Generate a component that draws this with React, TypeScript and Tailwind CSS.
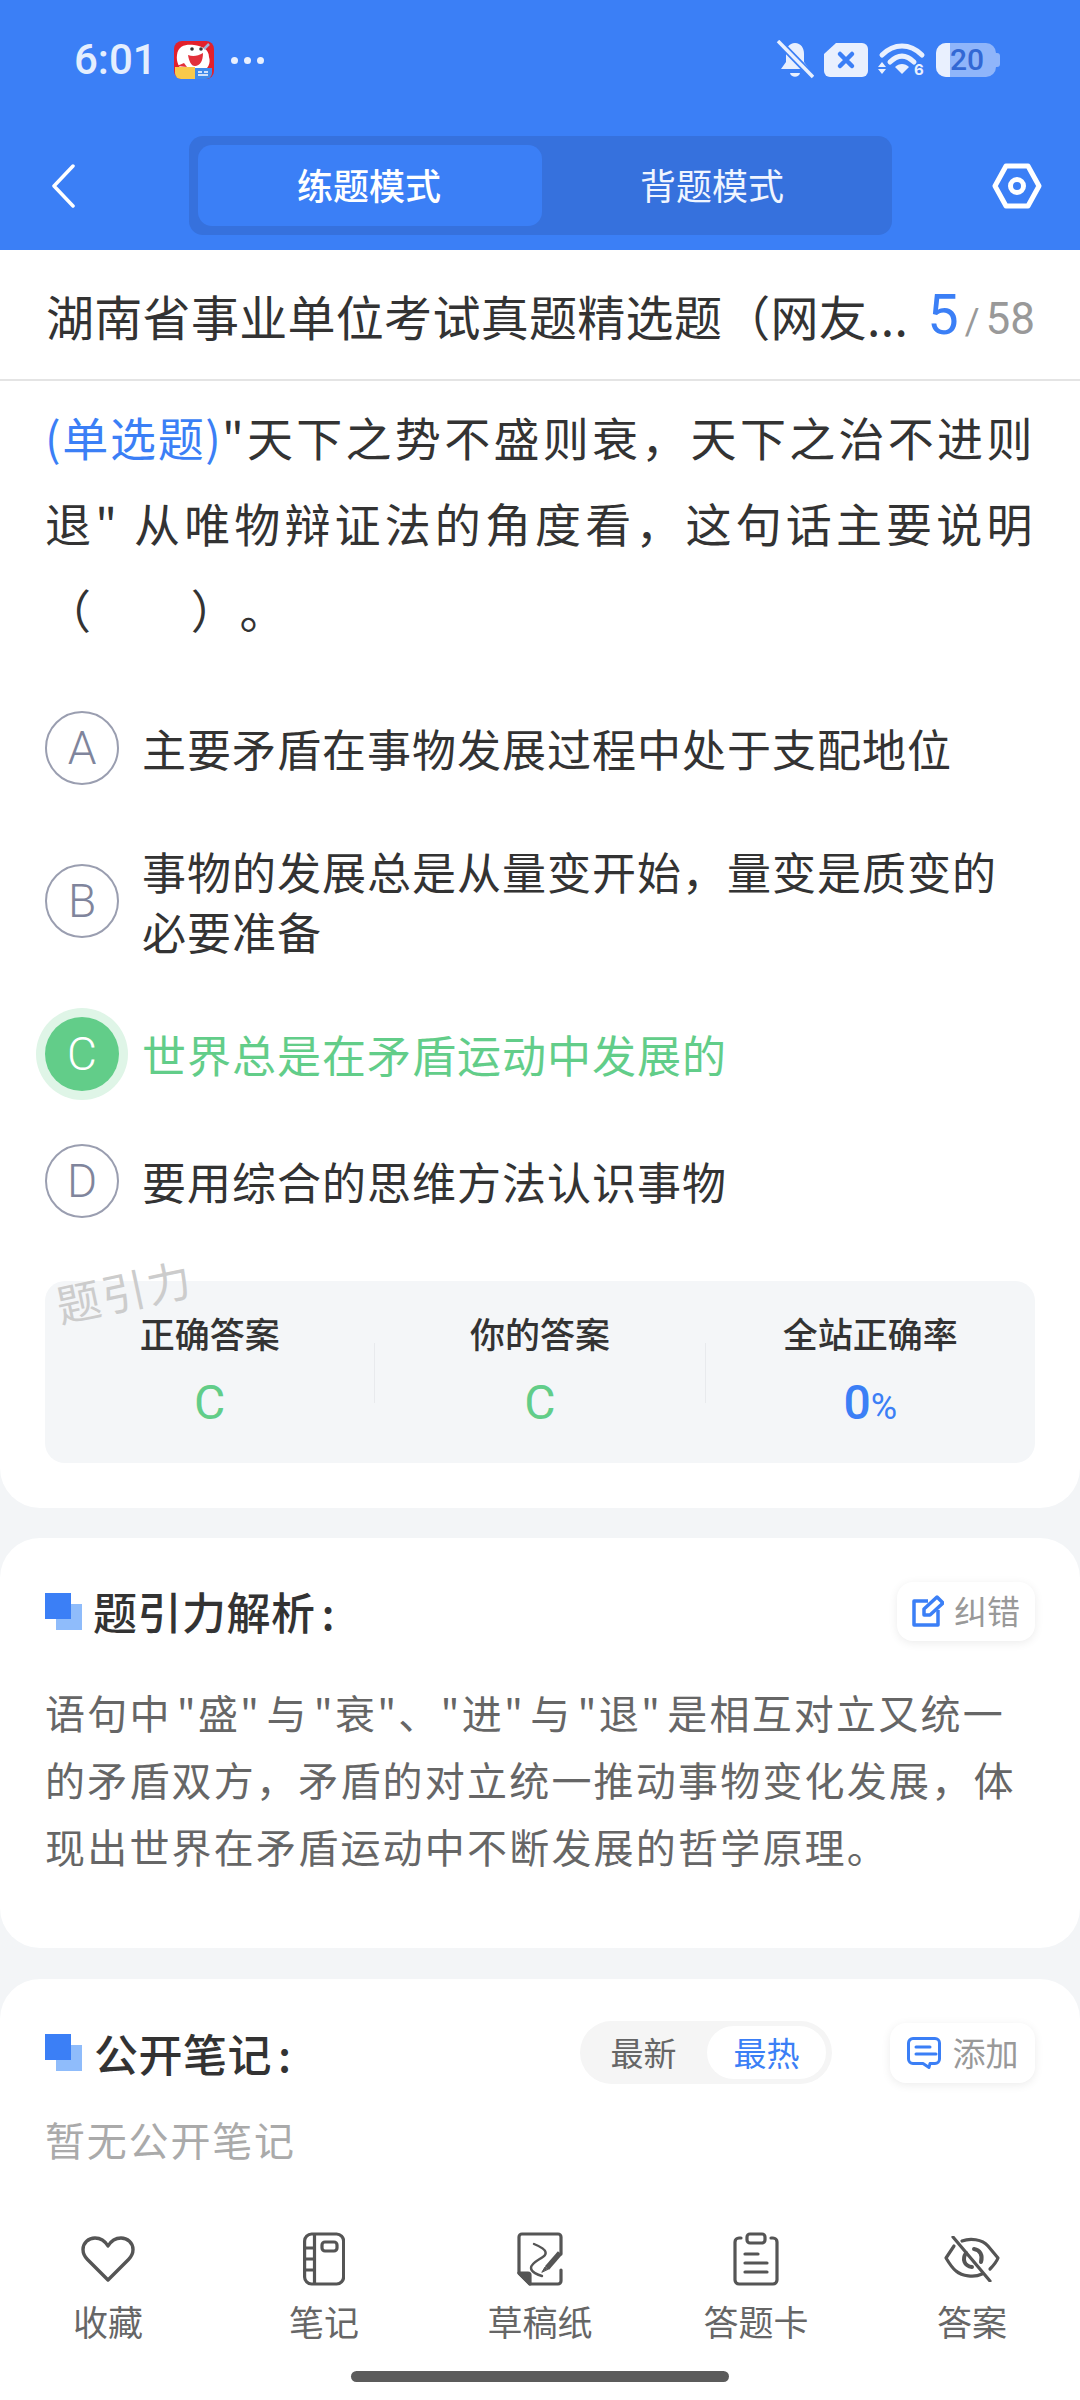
const font = "font-['Noto_Sans_CJK_SC','Noto_Sans',sans-serif]"

function StatusIcons() {
  return (
    <div className="flex items-center gap-[10px]">
      {/* muted bell */}
      <svg width="38" height="40" viewBox="0 0 38 40" className="text-[#e9f0fe]">
        <path d="M19 3c6 0 9 5 9 11v8l5 7H5l5-7v-8c0-6 3-11 9-11z" fill="currentColor" />
        <path d="M14 33h10c-1 5-9 5-10 0z" fill="currentColor" />
        <path d="M1 0L37 37" stroke="#3b7ff6" strokeWidth="7" />
        <path d="M2 1L37 37" stroke="currentColor" strokeWidth="3.5" />
      </svg>
      <svg width="44" height="34" viewBox="0 0 44 34">
        <path d="M12 0h26a6 6 0 016 6v22a6 6 0 01-6 6H6a6 6 0 01-6-6V11z" fill="#e9f0fe" />
        <path d="M16 11l12 12M28 11L16 23" stroke="#3b7ff6" strokeWidth="4.5" strokeLinecap="round" />
      </svg>
      <svg width="48" height="34" viewBox="0 0 48 34" fill="none" className="overflow-visible text-[#e9f0fe]">
        <path d="M4 12C16 0 32 0 44 12" stroke="currentColor" strokeWidth="5" strokeLinecap="round" />
        <path d="M12 19C20 11 28 11 36 19" stroke="currentColor" strokeWidth="5" strokeLinecap="round" />
        <path d="M17 24c4-4 10-4 14 0l-7 7z" fill="currentColor" />
        <path d="M4 19l4 5H0zM4 31l4-5H0z" fill="currentColor" />
        <text x="36" y="32" fontSize="15" fontWeight="700" fill="currentColor" fontFamily="Inter">6</text>
      </svg>
      <div className="relative flex h-[34px] w-[60px] items-center overflow-hidden rounded-[10px] bg-[#8fb5fa]">
        <div className="h-full w-[14px] bg-[#e9f0fe]" />
        <span className="absolute left-[14px] font-['Roboto'] text-[30px] leading-[34px] font-medium text-[#3268d4]">20</span>
      </div>
      <div className="-ml-[10px] h-[14px] w-[4px] rounded-r-[3px] bg-[#8fb5fa]" />
    </div>
  )
}

function AppIcon() {
  return (
    <svg width="40" height="38" viewBox="0 0 40 38">
      <rect width="40" height="38" rx="8" fill="#e2202c" />
      <path d="M3 14C4 4 13 3 20 4c8 1 15 4 15 12 2 6-1 12-6 14H10C5 27 2 21 3 14z" fill="#fff" />
      <path d="M14 14c5 2 10 1 15-2 0 8-3 13-8 13-4 0-6-5-7-11z" fill="#e2303a" />
      <circle cx="18" cy="8" r="1.8" fill="#333" />
      <circle cx="27" cy="8" r="1.8" fill="#333" />
      <path d="M30 8l5-5" stroke="#9fb4d8" strokeWidth="2.5" />
      <path d="M1 26h20v12H7a6 6 0 01-6-6z" fill="#f8c94a" />
      <path d="M3 25l7-3 3 4z" fill="#e2303a" />
      <path d="M21 27h17v5a6 6 0 01-6 6H21z" fill="#3f8bea" />
      <path d="M24 31h4M30 31h4M24 34h10" stroke="#fff" strokeWidth="1.5" />
    </svg>
  )
}

function Squares() {
  return (
    <div className="relative h-[37px] w-[37px] shrink-0">
      <div className="absolute right-0 bottom-0 h-[26px] w-[26px] bg-[#8fbcfb]" />
      <div className="absolute top-0 left-0 h-[26px] w-[26px] bg-[#3b7ff6]" />
    </div>
  )
}

function Option({ letter, lines, active }: { letter: string; lines: string[]; active?: boolean }) {
  return (
    <div className={`flex items-center gap-[23px] ${lines.length > 1 ? "py-[3px]" : ""}`}>
      {active ? (
        <div className="flex h-[74px] w-[74px] shrink-0 items-center justify-center rounded-full bg-[#62cd89] font-['Roboto'] text-[46px] font-light text-white shadow-[0_0_0_9px_#dff5e7]">
          {letter}
        </div>
      ) : (
        <div className="flex h-[74px] w-[74px] shrink-0 items-center justify-center rounded-full border-[2px] border-[#9a9eb0] font-['Roboto'] text-[46px] font-light text-[#80859c]">
          {letter}
        </div>
      )}
      <div className={`text-[44px] leading-[60px] tracking-[1px] ${active ? "text-[#62cd89]" : "text-[#333333]"}`}>
        {lines.map((l) => (
          <div key={l}>{l}</div>
        ))}
      </div>
    </div>
  )
}

function Stat({ label, children }: { label: string; children: React.ReactNode }) {
  return (
    <div className="flex flex-1 flex-col items-center">
      <div className="text-[35px] leading-[52px] font-medium text-[#333333]">{label}</div>
      <div className="mt-[16px] font-['Roboto'] text-[48px] leading-[56px]">{children}</div>
    </div>
  )
}

const tabs = [
  {
    label: "收藏",
    icon: (
      <svg width="54" height="48" viewBox="0 0 54 48" fill="none" stroke="currentColor" strokeWidth="3.4" strokeLinejoin="round">
        <path d="M27 45L6.5 24.5C3.5 21.5 2 18 2 14.5 2 8 7.5 3 14 3c5.5 0 10 3 13 8 3-5 7.500-8 13-8 6.500 0 12 5 12 11.500 0 3.500-1.500 7-4.500 10z" />
      </svg>
    ),
  },
  {
    label: "笔记",
    icon: (
      <svg width="42" height="54" viewBox="0 0 42 54" fill="none" stroke="currentColor" strokeWidth="3.2" strokeLinejoin="round">
        <rect x="1.600" y="2" width="39" height="50" rx="7" />
        <path d="M11.500 2v50M2 16h9.500M2 27h9.500M2 38h9.500" />
        <rect x="19" y="10" width="15" height="9" rx="3" />
      </svg>
    ),
  },
  {
    label: "草稿纸",
    icon: (
      <svg width="46" height="54" viewBox="0 0 46 54" fill="none" stroke="currentColor" strokeWidth="3.2" strokeLinejoin="round" strokeLinecap="round">
        <path d="M44 22V5a3 3 0 00-3-3H5a3 3 0 00-3 3v36l11 11h28a3 3 0 003-3V38" />
        <path d="M2 41h9a2 2 0 012 2v9z" fill="currentColor" />
        <path d="M17 12c5 2 14 6 11 11-3 4-14 7-14 13 0 4 7 7 11 8" strokeWidth="2.4" />
        <path d="M30 36l13-15" strokeWidth="5.500" strokeLinecap="butt" />
        <path d="M25 40l3-5 3 2z" fill="currentColor" strokeWidth="1" />
      </svg>
    ),
  },
  {
    label: "答题卡",
    icon: (
      <svg width="46" height="54" viewBox="0 0 46 54" fill="none" stroke="currentColor" strokeWidth="3.2" strokeLinecap="round" strokeLinejoin="round">
        <path d="M8 6H6a4 4 0 00-4 4v38a4 4 0 004 4h34a4 4 0 004-4V10a4 4 0 00-4-4h-2" />
        <rect x="14" y="2" width="18" height="9" rx="3" />
        <path d="M12 22h13M12 31h22M12 40h22" />
      </svg>
    ),
  },
  {
    label: "答案",
    icon: (
      <svg width="56" height="46" viewBox="0 0 56 46" fill="none" stroke="currentColor" strokeWidth="3.2" strokeLinecap="round" strokeLinejoin="round">
        <path d="M10 10L2 22c3 5 6 10 10 13 6 5 18 7 26 3" />
        <path d="M18 5c8-3 20-2 26 5l10 12c-2 5-5 8-8 11" />
        <path d="M22 17c-4 6-2 13 6 14M30 13c6 1 9 6 7 13" strokeWidth="4" />
        <path d="M9 1l37 44" />
      </svg>
    ),
  },
]

export default function App() {
  return (
    <div className={`${font} flex h-[2400px] w-[1080px] flex-col overflow-hidden bg-[#f3f5f7]`}>
      {/* Blue header */}
      <div className="h-[250px] shrink-0 bg-[#3b7ff6]">
        <div className="flex h-[136px] items-start justify-between pt-[40px] pr-[80px] pl-[74px]">
          <div className="flex items-center gap-[17px] text-[#e4eefe]">
            <span className="font-['Roboto'] text-[42px] leading-[40px] font-medium">6:01</span>
            <AppIcon />
            <span className="flex gap-[6px]">
              <i className="h-[7px] w-[7px] rounded-full bg-[#e9f0fe]" />
              <i className="h-[7px] w-[7px] rounded-full bg-[#e9f0fe]" />
              <i className="h-[7px] w-[7px] rounded-full bg-[#e9f0fe]" />
            </span>
          </div>
          <StatusIcons />
        </div>
        <div className="flex items-center pr-[38px] pl-[50px]">
          <svg width="26" height="44" viewBox="0 0 26 44" fill="none" stroke="#fff" strokeWidth="3.5" strokeLinecap="round" strokeLinejoin="round">
            <path d="M23 2L4 22l19 20" />
          </svg>
          <div className="ml-[113px] flex h-[99px] w-[703px] rounded-[14px] bg-[#3671dd] p-[9px] pr-0">
            <div className="flex h-[81px] w-[344px] items-center justify-center rounded-[14px] bg-[#3b7ff6] pr-[2px] pb-[4px] text-[36px] font-medium text-white">练题模式</div>
            <div className="flex h-[81px] w-[344px] items-center justify-center pr-[4px] pb-[4px] text-[36px] text-[#f0f5ff]">背题模式</div>
          </div>
          <svg className="ml-auto" width="50" height="46" viewBox="0 0 50 46" fill="none" stroke="#fff" strokeWidth="5" strokeLinejoin="round">
            <path d="M14 3h22l11 20-11 20H14L3 23z" />
            <circle cx="25" cy="23" r="6.5" />
          </svg>
        </div>
      </div>

      {/* Question card */}
      <div className="shrink-0 rounded-b-[40px] bg-white pb-[45px]">
        <div className="flex h-[131px] items-center border-b-[2px] border-[#e4e4e4] pr-[45px] pl-[46px]">
          <div className="shrink-0 text-[48px] tracking-[0.3px] whitespace-nowrap text-[#333333]">湖南省事业单位考试真题精选题（网友...</div>
          <div className="ml-auto flex items-baseline font-['Roboto']">
            <span className="text-[56px] text-[#3b7ff6]">5</span>
            <span className="mx-[6px] text-[36px] text-[#999999]">/</span>
            <span className="text-[44px] text-[#999999]">58</span>
          </div>
        </div>
        <div className="px-[45px] pt-[12px] text-[46px] leading-[86px] tracking-[2.6px] text-[#333333]">
          <div className="[text-align-last:justify]">
            <span className="tracking-[1px] text-[#3b7ff6]">(单选题)</span>"天下之势不盛则衰，天下之治不进则
          </div>
          <div className="[text-align-last:justify]">退" 从唯物辩证法的角度看，这句话主要说明</div>
          <div className="[text-spacing-trim:space-all]">（　　）。</div>
        </div>
        <div className="mt-[60px] flex flex-col gap-[53px] px-[45px]">
          <Option letter="A" lines={["主要矛盾在事物发展过程中处于支配地位"]} />
          <Option letter="B" lines={["事物的发展总是从量变开始，量变是质变的", "必要准备"]} />
          <Option letter="C" lines={["世界总是在矛盾运动中发展的"]} active />
          <Option letter="D" lines={["要用综合的思维方法认识事物"]} />
        </div>
        <div className="relative mx-[45px] mt-[63px] flex h-[182px] items-start rounded-[20px] bg-[#f4f6f8] pt-[26px]">
          <span className="absolute -top-[24px] left-[10px] -rotate-[12deg] text-[44px] tracking-[2px] text-[#cccccc]">题引力</span>
          <Stat label="正确答案">
            <span className="text-[#62cd89]">C</span>
          </Stat>
          <div className="mt-[36px] h-[60px] w-[1px] bg-[#e8eaed]" />
          <Stat label="你的答案">
            <span className="text-[#62cd89]">C</span>
          </Stat>
          <div className="mt-[36px] h-[60px] w-[1px] bg-[#e8eaed]" />
          <Stat label="全站正确率">
            <span className="font-medium text-[#3b7ff6]">
              0<span className="text-[36px] font-normal">%</span>
            </span>
          </Stat>
        </div>
      </div>

      {/* Analysis */}
      <div className="mt-[30px] h-[410px] shrink-0 rounded-[40px] bg-white px-[45px] pt-[43px]">
        <div className="flex items-center">
          <Squares />
          <span className="ml-[11px] text-[44px] leading-[60px] font-medium tracking-[0.5px] text-[#333333]">
            题引力解析<span className="ml-[6px]">:</span>
          </span>
          <div className="ml-auto flex h-[59px] w-[138px] items-center justify-center gap-[10px] rounded-[16px] bg-white text-[33px] text-[#999999] shadow-[0_2px_10px_rgba(0,0,0,0.08)]">
            <svg width="32" height="32" viewBox="0 0 32 32" fill="none" stroke="#3b7ff6" strokeWidth="3.5" strokeLinejoin="round">
              <path d="M16 6H2v24h24V15" />
              <path d="M12 20v-6L25 2l6 6-13 12z" />
            </svg>
            纠错
          </div>
        </div>
        <div className="mt-[38px] text-[40px] leading-[67px] tracking-[2.2px] text-[#666666]">
          <div className="whitespace-nowrap [word-spacing:-6px]">语句中 "盛" 与 "衰"、"进" 与 "退" 是相互对立又统一</div>
          <div>的矛盾双方，矛盾的对立统一推动事物变化发展，体</div>
          <div>现出世界在矛盾运动中不断发展的哲学原理。</div>
        </div>
      </div>

      {/* Public notes */}
      <div className="mt-[31px] flex flex-1 flex-col rounded-t-[40px] bg-white">
        <div className="px-[45px] pt-[42px]">
          <div className="flex items-center">
            <Squares />
            <span className="ml-[12px] text-[44px] leading-[60px] font-medium tracking-[0.5px] text-[#333333]">
              公开笔记<span className="ml-[6px]">:</span>
            </span>
            <div className="ml-auto flex h-[63px] w-[252px] items-center rounded-full bg-[#f5f5f5] pr-[6px] text-[33px]">
              <span className="flex-1 text-center text-[#666666]">最新</span>
              <span className="flex h-[53px] w-[119px] items-center justify-center rounded-full bg-white text-[#3b7ff6]">最热</span>
            </div>
            <div className="ml-[58px] flex h-[60px] w-[145px] items-center justify-center gap-[12px] rounded-[16px] bg-white text-[33px] text-[#999999] shadow-[0_2px_10px_rgba(0,0,0,0.08)]">
              <svg width="34" height="32" viewBox="0 0 34 32" fill="none" stroke="#3b7ff6" strokeWidth="3" strokeLinejoin="round" strokeLinecap="round">
                <path d="M6 1.500h22a4.500 4.500 0 014.500 4.500v16a4.500 4.500 0 01-4.500 4.500h-5l-1 4-6-4H6a4.500 4.500 0 01-4.500-4.500V6A4.500 4.500 0 016 1.500z" />
                <path d="M9 10h14M9 17h20" />
              </svg>
              添加
            </div>
          </div>
          <p className="mt-[27px] text-[40px] leading-[56px] tracking-[1.8px] text-[#aaaaaa]">暂无公开笔记</p>
        </div>

        {/* Bottom toolbar */}
        <div className="mt-auto grid grid-cols-5">
          {tabs.map((t) => (
            <div key={t.label} className="flex flex-col items-center">
              <div className="flex h-[56px] items-center text-[#555555]">{t.icon}</div>
              <div className="mt-[10px] text-[35px] leading-[48px] text-[#666666]">{t.label}</div>
            </div>
          ))}
        </div>
        <div className="mx-auto mt-[26px] mb-[18px] h-[11px] w-[378px] rounded-full bg-[#5b5b5b]" />
      </div>
    </div>
  )
}
